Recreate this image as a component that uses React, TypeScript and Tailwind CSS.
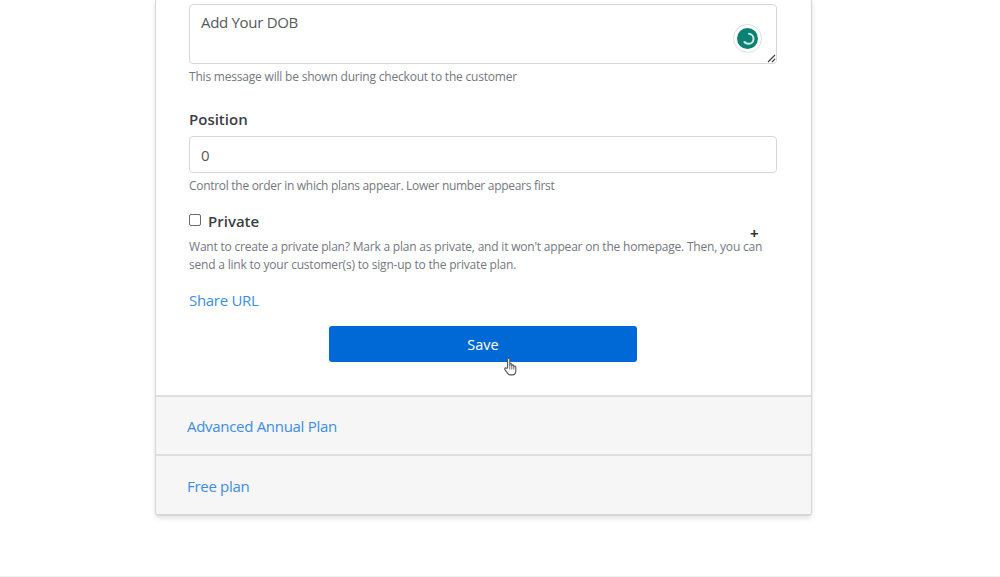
import React from 'react';

const HandCursor = () => (
  <svg width="16" height="20" viewBox="0 0 16 20" className="absolute left-[503px] top-[357px]">
    <path
      d="M4.6 11V2.4c0-1.5 2.2-1.5 2.2 0V8.4V7.6c0-1.3 2-1.3 2 0V8.8c0-1.2 2-1.2 2 .1v.8c0-1.1 2-1 2 .2v3.6c0 2.4-1.2 4.4-3.6 4.4H7.4c-1.5 0-2.3-.7-3.1-2L1.9 12.6c-.7-1.3 1-2.4 1.9-1.3z"
      fill="#ffffff"
      stroke="#555555"
      strokeWidth="1.1"
      strokeLinejoin="round"
    />
    <path d="M6.8 8.6v4M8.8 8.8v3.8M10.8 9.6v3" stroke="#555555" strokeWidth="0.8" fill="none" />
  </svg>
);

export default function App() {
  return (
    <div className="relative h-[577px] w-[1000px] overflow-hidden bg-white font-['Open_Sans','Noto_Sans',sans-serif] text-[#4a4f55]">
      <div className="ml-[155px] h-[516px] w-[657px] overflow-hidden rounded-b-[4px] border-x border-b-2 border-[#d6d6d6] shadow-[0_2px_5px_rgba(0,0,0,0.12)]">
        <div className="h-[395px] bg-white pl-[33px] pt-[4px]">
          <div className="relative h-[60px] w-[588px] rounded-[4px] border border-[#d6d8dc] px-[11px] pb-[5px] pt-[7px] text-[15px] leading-[20px] tracking-[-0.3px] text-[#555a60]">
            Add Your DOB
            <div className="absolute left-[543px] top-[19px] flex h-[29px] w-[29px] items-center justify-center rounded-full border border-[#dcdfe6] bg-white">
              <svg width="21" height="21" viewBox="0 0 21 21">
                <circle cx="10.5" cy="10.5" r="10.5" fill="#0a8273" />
                <path d="M12 5.8a5 5 0 0 1-1 10 5 5 0 0 1-3.6-1.8" fill="none" stroke="#cdeae5" strokeWidth="2" strokeLinecap="round" />
              </svg>
            </div>
            <svg width="9" height="9" viewBox="0 0 9 9" className="absolute bottom-[0px] right-[0px]">
              <path d="M1 8 8 1M5 8 8 5" stroke="#444444" strokeWidth="1.2" />
            </svg>
          </div>
          <p className="mt-[4px] text-[12px] leading-[18px] tracking-[-0.2px] text-[#737880]">This message will be shown during checkout to the customer</p>

          <label className="mt-[23px] block text-[15px] font-semibold leading-[20px] text-[#3c3f44]">Position</label>
          <div className="mt-[7px] flex h-[37px] w-[588px] items-center rounded-[4px] border border-[#d6d8dc] px-[11px] pt-[2px] text-[15px] text-[#555a60]">0</div>
          <p className="mt-[4px] text-[12px] leading-[18px] tracking-[-0.29px] text-[#737880]">Control the order in which plans appear. Lower number appears first</p>

          <div className="mt-[16px] flex items-center">
            <span className="mb-[3px] h-[12px] w-[12px] rounded-[2px] border-[1.5px] border-[#6a6a6a] bg-white" />
            <span className="ml-[7px] text-[15px] font-semibold leading-[20px] text-[#3c3f44]">Private</span>
          </div>
          <p className="mt-[7px] w-[588px] text-[12px] leading-[18px] tracking-[-0.2px] text-[#737880]">
            Want to create a private plan? Mark a plan as private, and it won't appear on the homepage. Then, you can send a link to your customer(s) to sign-up to the private plan.
          </p>
          <a className="mt-[16px] block text-[15px] leading-[20px] tracking-[-0.3px] text-[#3b8de8]">Share URL</a>
          <div className="mt-[16px] flex w-[588px] justify-center">
            <button className="h-[36px] w-[308px] rounded-[3px] bg-[#0069d6] pt-[2px] text-[14.5px] font-medium text-white">Save</button>
          </div>
        </div>
        <div className="flex h-[59px] items-center border-t-2 border-[#dfdfdf] bg-[#f6f6f6] pl-[31px] pt-[1px] text-[15px] tracking-[-0.3px] text-[#3b8de8]">Advanced Annual Plan</div>
        <div className="flex h-[60px] items-center border-t-2 border-[#dfdfdf] bg-[#f6f6f6] pl-[31px] pt-[2px] text-[15px] tracking-[-0.3px] text-[#3b8de8]">Free plan</div>
      </div>
      <span className="absolute left-[750px] top-[224px] text-[15px] font-bold leading-[18px] text-[#333333]">+</span>
      <HandCursor />
      <div className="absolute bottom-0 left-0 h-px w-full bg-[#f0f0f0]" />
    </div>
  );
}
